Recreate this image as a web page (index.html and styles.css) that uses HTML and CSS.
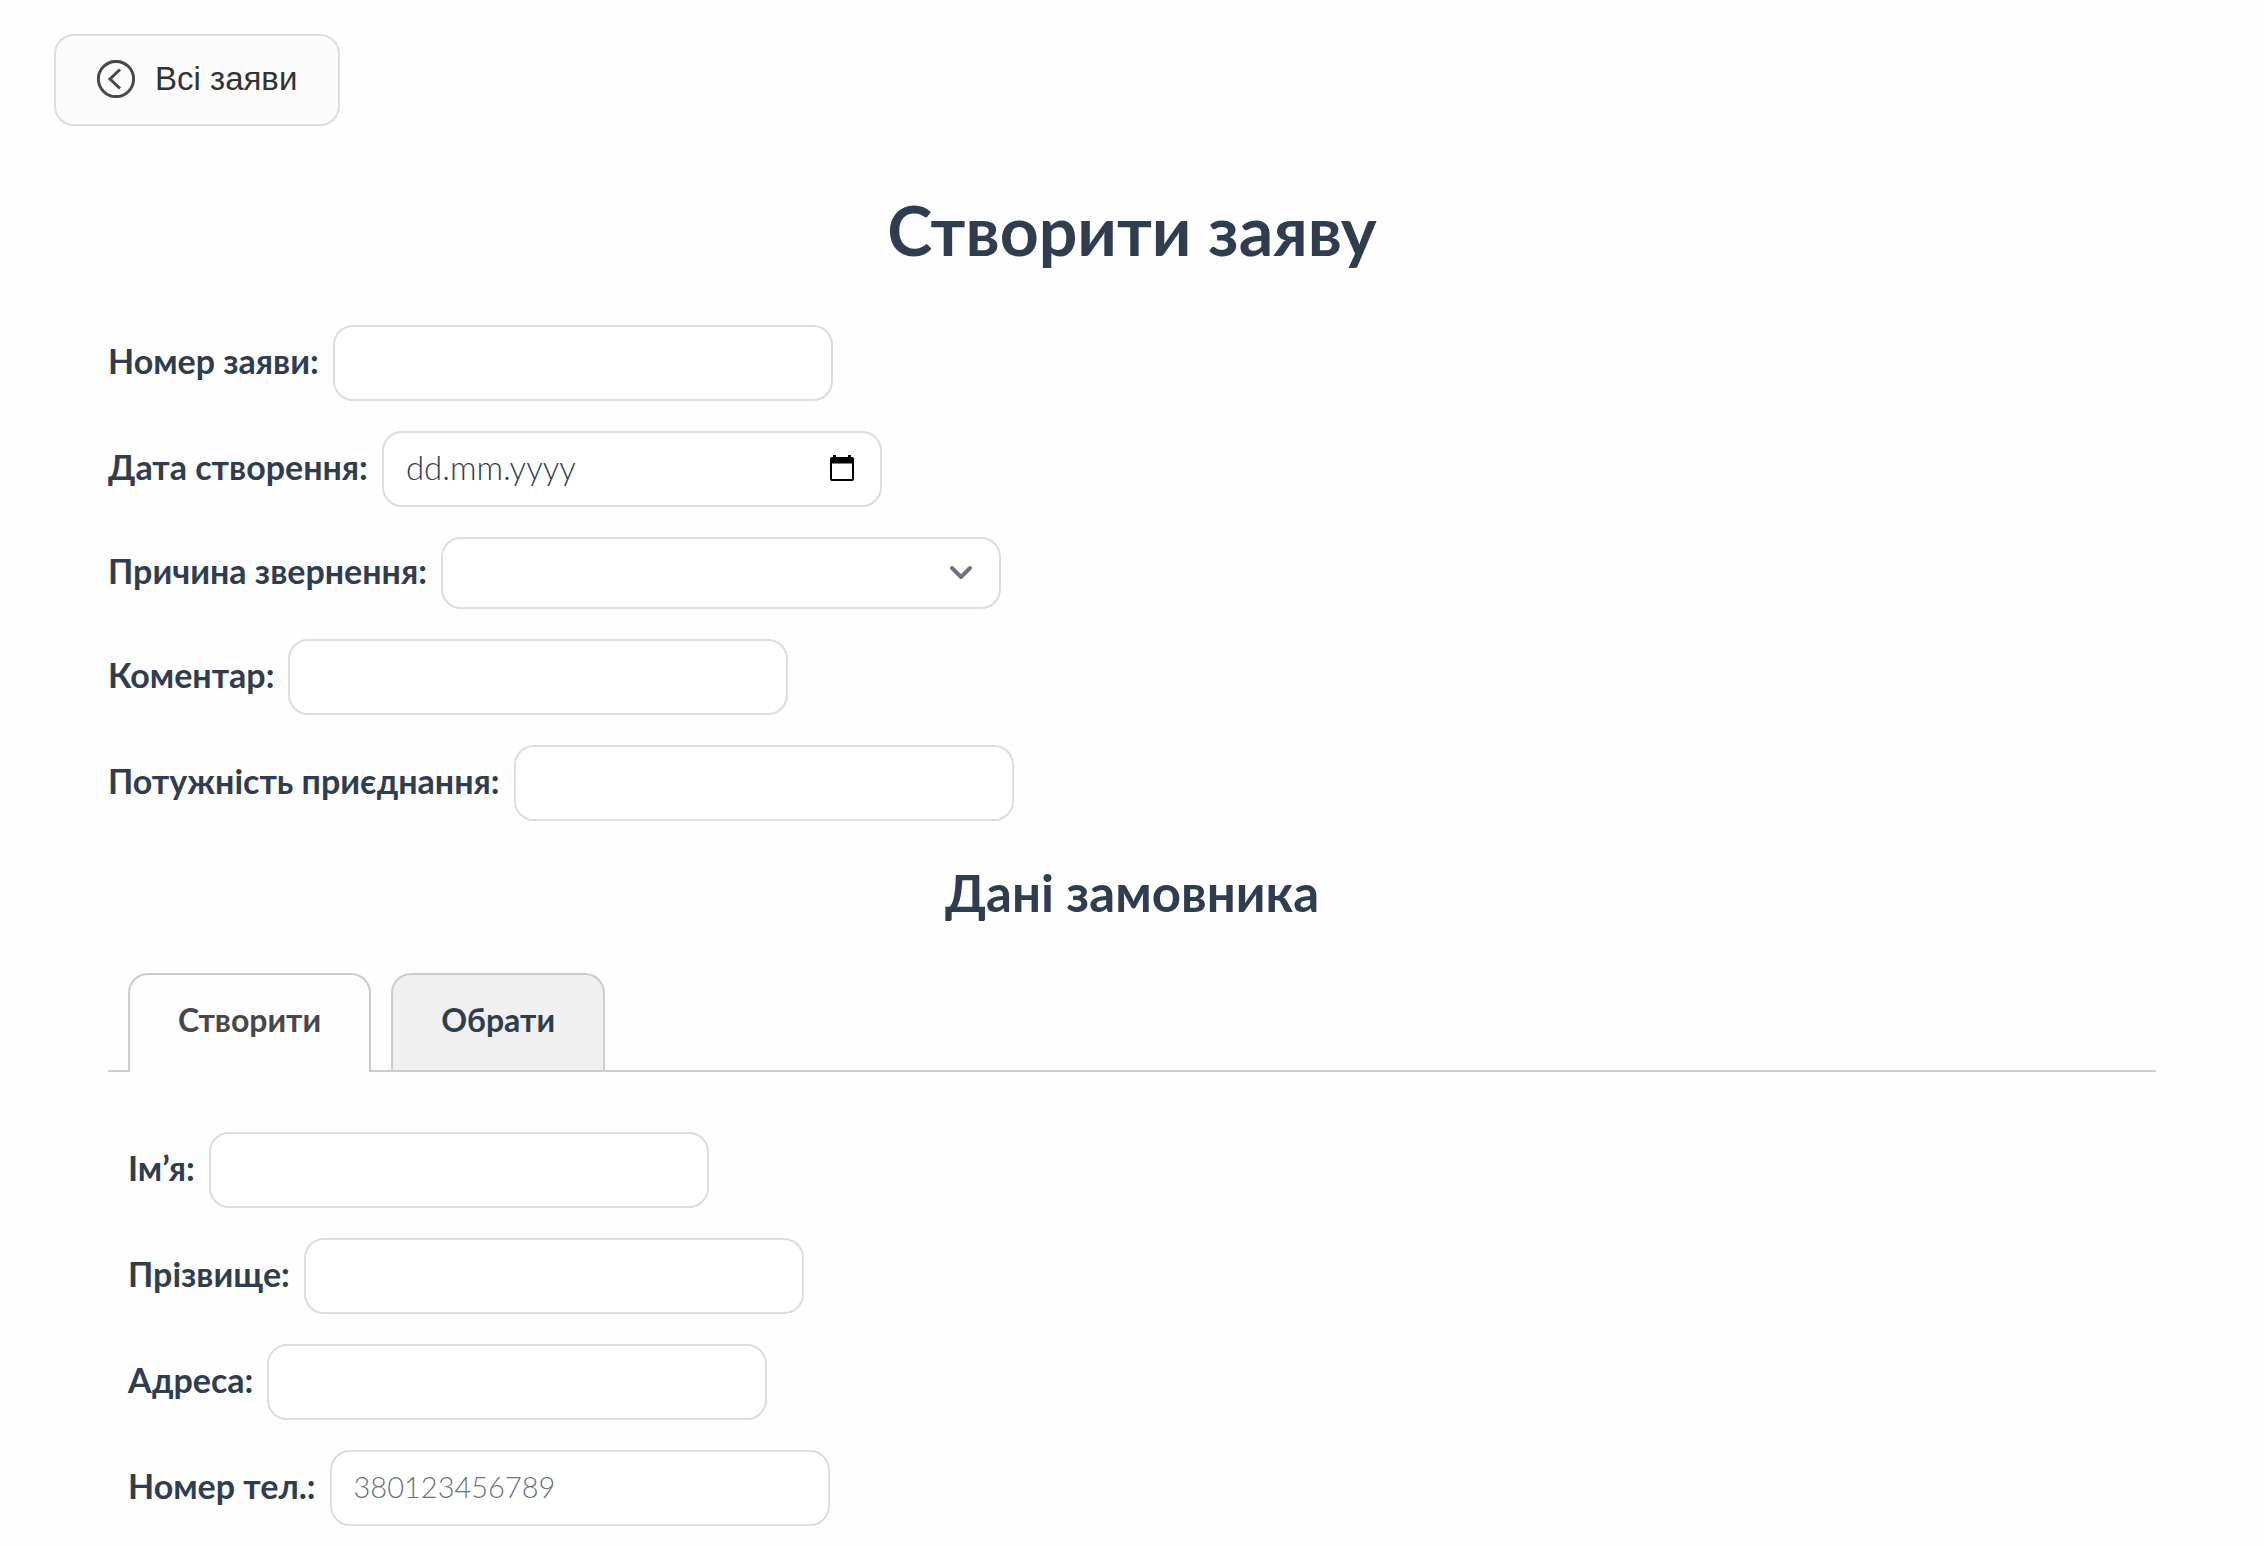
FILE: index.html
```html
<!DOCTYPE html>
<html lang="uk">
<head>
<meta charset="utf-8">
<meta name="viewport" content="width=device-width, initial-scale=1">
<title>Створити заяву</title>
<link rel="stylesheet" href="styles.css">
</head>
<body>
<header class="topbar">
  <button class="back" type="button">
    <svg class="back-icon" viewBox="0 0 38 38" aria-hidden="true"><circle cx="19" cy="19" r="17.6"/><path d="M23 9.5 13 19l10 9.5"/></svg>
    Всі заяви
  </button>
</header>
<main>
  <form class="form">
    <h1>Створити заяву</h1>
    <div class="fields">
      <div class="field"><label for="number">Номер заяви:</label><input class="control" id="number" type="text"></div>
      <div class="field">
        <label for="created">Дата створення:</label>
        <div class="control-wrap">
          <input class="control date" id="created" type="text" placeholder="dd.mm.yyyy">
          <svg class="calendar" viewBox="0 0 24 26" aria-hidden="true"><path fill-rule="evenodd" d="M3 0h3v2h12V0h3v2h1a2 2 0 0 1 2 2v20a2 2 0 0 1-2 2H2a2 2 0 0 1-2-2V4a2 2 0 0 1 2-2h1zM2 8.500v15.500h20V8.500z"/></svg>
        </div>
      </div>
      <div class="field">
        <label for="reason">Причина звернення:</label>
        <div class="control-wrap">
          <select class="control select" id="reason"><option value=""></option></select>
          <svg class="chevron" viewBox="0 0 24 16" aria-hidden="true"><path d="m3 3 9 9 9-9"/></svg>
        </div>
      </div>
      <div class="field"><label for="comment">Коментар:</label><input class="control" id="comment" type="text"></div>
      <div class="field"><label for="power">Потужність приєднання:</label><input class="control" id="power" type="text"></div>
    </div>
    <h2>Дані замовника</h2>
    <div class="tabs" role="tablist">
      <button class="tab active" type="button" role="tab" aria-selected="true">Створити</button>
      <button class="tab" type="button" role="tab" aria-selected="false">Обрати</button>
    </div>
    <div class="fields panel" role="tabpanel">
      <div class="field"><label for="first">Ім’я:</label><input class="control" id="first" type="text"></div>
      <div class="field"><label for="last">Прізвище:</label><input class="control" id="last" type="text"></div>
      <div class="field"><label for="address">Адреса:</label><input class="control" id="address" type="text"></div>
      <div class="field"><label for="phone">Номер тел.:</label><input class="control" id="phone" type="tel" placeholder="380123456789"></div>
    </div>
  </form>
</main>
</body>
</html>
```
FILE: styles.css
```css
* {
  box-sizing: border-box;
}

body {
  margin: 0;
  background: #fefefe;
  color: #2f3d4f;
  font-family: Lato, "Open Sans", sans-serif;
  font-size: 34px;
  line-height: 44px;
}

.topbar {
  padding: 34px 54px 0;
}

.back {
  display: flex;
  align-items: center;
  gap: 20px;
  height: 92px;
  padding: 0 41px 2px;
  border: 2px solid #ddd;
  border-radius: 20px;
  background: #fbfbfb;
  color: #333;
  font-family: "Liberation Sans", Arial, sans-serif;
  font-size: 33px;
}

.back-icon {
  width: 38px;
  height: 38px;
  fill: none;
  stroke: #484848;
  stroke-width: 3;
}

.form {
  padding: 64px 108px 20px;
}

h1,
h2 {
  margin: 0;
  text-align: center;
  font-weight: 700;
}

h1 {
  font-size: 68px;
  line-height: 80px;
}

h2 {
  margin-top: 40px;
  font-size: 51px;
  line-height: 64px;
}

.fields {
  display: flex;
  flex-direction: column;
  gap: 30px;
  margin-top: 55px;
}

.field {
  display: flex;
  align-items: center;
  gap: 14px;
}

label {
  font-weight: 700;
  padding-bottom: 4px;
}

.control {
  display: block;
  width: 500px;
  height: 76px;
  padding: 0 22px 4px;
  border: 2px solid #ddd;
  border-radius: 20px;
  background: #fff;
  color: inherit;
  font-family: inherit;
  font-size: 29px;
  font-weight: 300;
}

.control::placeholder {
  color: #6b7280;
  opacity: 1;
}

.control-wrap {
  position: relative;
}

.date {
  font-size: 33px;
}

.date::placeholder {
  color: #2f3d4f;
}

.calendar {
  position: absolute;
  top: 24px;
  right: 28px;
  width: 24px;
  height: 26px;
}

.select {
  width: 560px;
  height: 72px;
  appearance: none;
}

.chevron {
  position: absolute;
  top: 28px;
  right: 28px;
  width: 24px;
  height: 16px;
  fill: none;
  stroke: #6b7280;
  stroke-width: 4;
  stroke-linecap: round;
  stroke-linejoin: round;
}

.tabs {
  display: flex;
  gap: 20px;
  margin-top: 48px;
  padding: 0 20px;
  border-bottom: 2px solid #ccc;
}

.tab {
  height: 97px;
  padding: 0 48px 6px;
  border: 2px solid #ccc;
  border-bottom: 0;
  border-radius: 20px 20px 0 0;
  background: #f0f0f0;
  color: inherit;
  font-family: inherit;
  font-size: 32px;
  font-weight: 700;
}

.tab.active {
  height: 99px;
  margin-bottom: -2px;
  padding-bottom: 8px;
  background: #fefefe;
  color: #484848;
}

.panel {
  margin-top: 60px;
  padding-left: 20px;
}
```
